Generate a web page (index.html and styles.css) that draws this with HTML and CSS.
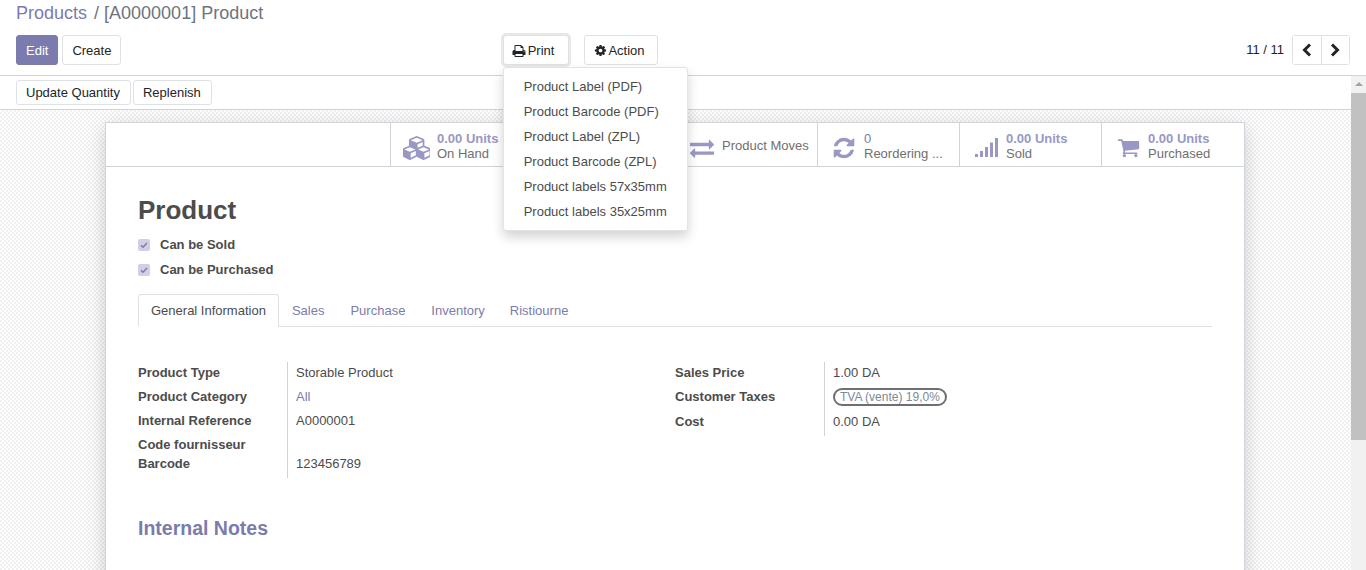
FILE: index.html
```html
<!DOCTYPE html>
<html lang="en">
<head>
<meta charset="utf-8">
<title>Product</title>
<link rel="stylesheet" href="styles.css">
</head>
<body>
<header class="control-panel">
  <ol class="breadcrumb"><li class="crumb-link">Products</li><li class="crumb-sep">/</li><li class="crumb-active">[A0000001] Product</li></ol>
  <div class="cp-row">
    <div class="cp-left">
      <button class="btn btn-primary">Edit</button>
      <button class="btn">Create</button>
    </div>
    <div class="cp-center">
      <div class="dropdown">
        <button class="btn btn-focus btn-print"><svg class="btn-icon" viewBox="0 0 1792 1792"><path d="M448 1536h896v-256h-896v256zm0-640h896v-384h-160q-40 0-68-28t-28-68v-160h-640v640zm1152 64q0-26-19-45t-45-19-45 19-19 45 19 45 45 19 45-19 19-45zm128 0v416q0 13-9.5 22.5t-22.5 9.5h-224v160q0 40-28 68t-68 28h-960q-40 0-68-28t-28-68v-160h-224q-13 0-22.5-9.5t-9.5-22.5v-416q0-79 56.5-135.5t135.5-56.5h64v-544q0-40 28-68t68-28h672q40 0 88 20t76 48l152 152q28 28 48 76t20 88v256h64q79 0 135.5 56.5t56.5 135.5z"/></svg>Print</button>
        <ul class="menu">
          <li>Product Label (PDF)</li>
          <li>Product Barcode (PDF)</li>
          <li>Product Label (ZPL)</li>
          <li>Product Barcode (ZPL)</li>
          <li>Product labels 57x35mm</li>
          <li>Product labels 35x25mm</li>
        </ul>
      </div>
      <button class="btn btn-action"><svg class="btn-icon" viewBox="0 0 1792 1792"><path d="M1152 896q0-106-75-181t-181-75-181 75-75 181 75 181 181 75 181-75 75-181zm512-109v222q0 12-8 23t-20 13l-185 28q-19 54-39 91 35 50 107 138 10 12 10 25t-9 23q-27 37-99 108t-94 71q-12 0-26-9l-138-108q-44 23-91 38-16 136-29 186-7 28-36 28h-222q-14 0-24.5-8.5t-11.5-21.5l-28-184q-49-16-90-37l-141 107q-10 9-25 9-14 0-25-11-126-114-165-168-7-10-7-23 0-12 8-23 15-21 51-66.5t54-70.5q-27-50-41-99l-183-27q-13-2-21-12.5t-8-23.5v-222q0-12 8-23t19-13l186-28q14-46 39-92-40-57-107-138-10-12-10-24 0-10 9-23 26-36 98.5-107.5t94.5-71.5q13 0 26 10l138 107q44-23 91-38 16-136 29-186 7-28 36-28h222q14 0 24.5 8.5t11.5 21.5l28 184q49 16 90 37l142-107q9-9 24-9 13 0 25 10 129 119 165 170 7 8 7 22 0 12-8 23-15 21-51 66.5t-54 70.5q26 50 41 98l183 28q13 2 21 12.5t8 23.5z"/></svg>Action</button>
    </div>
    <div class="cp-right">
      <span class="pager-text">11 / 11</span>
      <div class="pager-group">
        <button class="pager-btn"><svg class="chev" viewBox="0 0 12 14"><path d="M9 1.5 3.5 7 9 12.5"/></svg></button>
        <button class="pager-btn"><svg class="chev" viewBox="0 0 12 14"><path d="M3 1.5 8.5 7 3 12.5"/></svg></button>
      </div>
    </div>
  </div>
</header>
<div class="workspace">
  <div class="scroll-area">
    <div class="statusbar">
      <button class="btn btn-small">Update Quantity</button>
      <button class="btn btn-small">Replenish</button>
    </div>
    <main class="sheet-bg">
      <article class="sheet">
        <div class="button-box">
          <div class="stat stat-first">
            <svg class="stat-icon stat-cubes" viewBox="0 0 2048 1792"><path d="M576 1632l384-192v-314l-384 164v342zm-64-454l404-173-404-173-404 173zm1088 454l384-192v-314l-384 164v342zm-64-454l404-173-404-173-404 173zm-448-293l384-165v-266l-384 164v267zm-64-379l441-189-441-189-441 189zm1088 518v416q0 36-19 67t-52 47l-448 224q-25 14-57 14t-57-14l-448-224q-4-2-7-4-2 2-7 4l-448 224q-25 14-57 14t-57-14l-448-224q-33-16-52-47t-19-67v-416q0-38 21.5-70t56.5-48l434-186v-400q0-38 21.5-70t56.5-48l448-192q23-10 50-10t50 10l448 192q35 16 56.5 48t21.5 70v400l434 186q36 16 57 48t21 70z"/></svg>
            <div class="stat-info"><span class="stat-value">0.00 Units</span><span class="stat-text">On Hand</span></div>
          </div>
          <div class="stat"></div>
          <div class="stat">
            <svg class="stat-icon" viewBox="0 0 1792 1792"><path d="M1792 1184v192q0 13-9.5 22.5t-22.5 9.5h-1376v192q0 13-9.5 22.5t-22.5 9.5q-12 0-24-10l-319-320q-9-9-9-22 0-14 9-23l320-320q9-9 23-9 13 0 22.5 9.5t9.5 22.5v192h1376q13 0 22.5 9.5t9.5 22.5zm0-544q0 14-9 23l-320 320q-9 9-23 9-13 0-22.5-9.5t-9.5-22.5v-192h-1376q-13 0-22.5-9.5t-9.5-22.5v-192q0-13 9.5-22.5t22.5-9.5h1376v-192q0-14 9-23t23-9q12 0 24 10l319 319q9 9 9 23z"/></svg>
            <div class="stat-info stat-single"><span class="stat-text">Product Moves</span></div>
          </div>
          <div class="stat">
            <svg class="stat-icon" viewBox="0 0 1792 1792"><path d="M1639 1056q0 5-1 7-64 268-268 434.5t-478 166.5q-146 0-282.5-55t-243.5-157l-129 129q-19 19-45 19t-45-19-19-45v-448q0-26 19-45t45-19h448q26 0 45 19t19 45-19 45l-137 137q71 66 161 102t187 36q134 0 250-65t186-179q11-17 53-117 8-23 30-23h192q13 0 22.5 9.5t9.5 22.5zm25-800v448q0 26-19 45t-45 19h-448q-26 0-45-19t-19-45 19-45l138-138q-148-137-349-137-134 0-250 65t-186 179q-11 17-53 117-8 23-30 23h-199q-13 0-22.5-9.5t-9.5-22.5v-7q65-268 270-434.5t480-166.5q146 0 284 55.5t245 156.5l130-129q19-19 45-19t45 19 19 45z"/></svg>
            <div class="stat-info"><span class="stat-value stat-value-plain">0</span><span class="stat-text">Reordering ...</span></div>
          </div>
          <div class="stat stat-wide">
            <svg class="stat-icon stat-signal" viewBox="0 0 23 19"><rect x="0" y="16" width="3" height="3"/><rect x="5" y="13" width="3" height="6"/><rect x="10" y="9" width="3" height="10"/><rect x="15" y="4.5" width="3" height="14.5"/><rect x="20" y="0" width="3" height="19"/></svg>
            <div class="stat-info"><span class="stat-value">0.00 Units</span><span class="stat-text">Sold</span></div>
          </div>
          <div class="stat stat-wide">
            <svg class="stat-icon stat-cart" viewBox="0 0 1792 1792"><path d="M704 1536q0 52-38 90t-90 38-90-38-38-90 38-90 90-38 90 38 38 90zm896 0q0 52-38 90t-90 38-90-38-38-90 38-90 90-38 90 38 38 90zm128-1088v512q0 24-16.5 42.5t-40.5 21.5l-1044 122q13 60 13 70 0 16-24 64h920q26 0 45 19t19 45-19 45-45 19h-1024q-26 0-45-19t-19-45q0-11 8-31.5t16-36 21.5-40 15.5-29.5l-177-823h-204q-26 0-45-19t-19-45 19-45 45-19h256q16 0 28.5 6.5t19.5 15.5 13 24.5 8 26 5.5 29.5 4.5 26h1201q26 0 45 19t19 45z"/></svg>
            <div class="stat-info"><span class="stat-value">0.00 Units</span><span class="stat-text">Purchased</span></div>
          </div>
        </div>
        <div class="sheet-body">
          <h1 class="title">Product</h1>
          <div class="options">
            <label class="option"><span class="checkbox"><svg viewBox="0 0 12 12"><path d="M3 6.3 5 8.2 9 4"/></svg></span>Can be Sold</label>
            <label class="option"><span class="checkbox"><svg viewBox="0 0 12 12"><path d="M3 6.3 5 8.2 9 4"/></svg></span>Can be Purchased</label>
          </div>
          <nav class="tabs">
            <span class="tab tab-active">General Information</span>
            <span class="tab">Sales</span>
            <span class="tab">Purchase</span>
            <span class="tab">Inventory</span>
            <span class="tab">Ristiourne</span>
          </nav>
          <div class="groups">
            <dl class="fields fields-left">
              <dt>Product Type</dt><dd>Storable Product</dd>
              <dt>Product Category</dt><dd class="link">All</dd>
              <dt>Internal Reference</dt><dd>A0000001</dd>
              <dt class="tight">Code fournisseur</dt><dd class="tight"></dd>
              <dt>Barcode</dt><dd>123456789</dd>
            </dl>
            <dl class="fields fields-right">
              <dt>Sales Price</dt><dd>1.00 DA</dd>
              <dt>Customer Taxes</dt><dd><span class="tag">TVA (vente) 19,0%</span></dd>
              <dt>Cost</dt><dd>0.00 DA</dd>
            </dl>
          </div>
          <h2 class="notes">Internal Notes</h2>
        </div>
      </article>
    </main>
  </div>
  <div class="scrollbar"><span class="scroll-up"></span><span class="scroll-thumb"></span></div>
</div>
</body>
</html>
```
FILE: styles.css
```css
* { box-sizing: border-box; }
html, body { margin: 0; height: 100%; overflow: hidden; }
body {
  display: flex; flex-direction: column; height: 570px;
  font-family: "Liberation Sans", Arial, sans-serif;
  font-size: 13px; line-height: 19.5px; color: #4c4c4c; background: #fff;
}
button { font: inherit; margin: 0; }
ul, ol, dl, dd { margin: 0; padding: 0; list-style: none; }

.control-panel { height: 76px; flex: none; border-bottom: 1px solid #ced4da; padding: 0 16px; }
.breadcrumb { display: flex; height: 27px; font-size: 18px; line-height: 27px; }
.crumb-link { color: #7c7bad; }
.crumb-sep { color: #6c757d; padding: 0 5px 0 7px; }
.crumb-active { color: #6c757d; }
.cp-row { display: grid; grid-template-columns: 1fr 1fr 1fr; margin-top: 8px; }
.cp-left { display: flex; gap: 4px; }
.cp-center { display: flex; gap: 15px; justify-content: flex-start; padding-left: 42px; }
.cp-right { display: flex; justify-content: flex-end; align-items: center; gap: 8px; }

.btn {
  display: inline-flex; align-items: center; height: 30px; padding: 1px 9px 0;
  border: 1px solid #dee2e6; border-radius: 3px; background: #fff; color: #212529; white-space: nowrap;
}
.btn-primary { background: #7c7bad; border-color: #7c7bad; color: #fff; }
.btn-focus { box-shadow: 0 0 0 2px #e8e8e8; }
.btn-print { padding: 1px 14px 0 8px; }
.btn-print .btn-icon { width: 14px; height: 14px; }
.btn-action { padding: 1px 12px 0 9px; }
.btn-action .btn-icon { margin-right: 1px; }
.btn-small { height: 25px; padding: 0 10px 0 9px; }
.btn-icon { width: 13px; height: 13px; margin-right: 2px; fill: #212529; }

.dropdown { position: relative; }
.menu {
  position: absolute; top: 32px; left: 0; z-index: 5; width: 185px; padding: 6px 0 6px;
  background: #fff; border: 1px solid #e3e3e3; border-radius: 3px;
  box-shadow: 0 6px 12px rgba(0,0,0,.176); color: #4c4c4c;
}
.menu li { height: 25px; line-height: 25px; padding-left: 20px; white-space: nowrap; }

.pager-text { color: #212529; }
.pager-group { display: flex; border: 1px solid #dee2e6; border-radius: 3px; height: 30px; }
.pager-btn { display: flex; align-items: center; justify-content: center; width: 28px; border: 0; padding: 0; background: #fff; }
.pager-btn + .pager-btn { border-left: 1px solid #dee2e6; width: 28px; }
.chev { width: 12px; height: 14px; fill: none; stroke: #212529; stroke-width: 3; }

.workspace { flex: 1; display: flex; min-height: 0; }
.scroll-area { flex: 1; min-width: 0; display: flex; flex-direction: column; }
.statusbar { flex: none; height: 34px; padding: 4px 16px 0; display: flex; gap: 2px; border-bottom: 1px solid #ced4da; background: #fff; }
.scrollbar { flex: none; width: 15px; background: #f1f1f1; display: flex; flex-direction: column; }
.scroll-up { display: block; height: 17px; position: relative; }
.scroll-up::before {
  content: ""; display: block; width: 0; margin: 6px auto 0;
  border: 4px solid transparent; border-top: 0; border-bottom: 4px solid #a3a3a3;
}
.scroll-thumb { display: block; height: 347px; background: #c1c1c1; }

.sheet-bg {
  flex: 1; min-height: 0; overflow: hidden; padding: 12px 106px 0 105px;
  background-color: #fff;
  background-image: conic-gradient(#f0f0f0 25%, #fff 0 50%, #f0f0f0 0 75%, #fff 0);
  background-size: 4px 4px;
}
.sheet {
  width: 1140px; height: 480px; background: #fff; border: 1px solid #ced4da;
  box-shadow: 0 5px 20px -1px rgba(0,0,0,.2);
}
.button-box { display: grid; grid-template-columns: 143px repeat(4, 142px) 143px; justify-content: end; height: 44px; border-bottom: 1px solid #ced4da; }
.stat { display: flex; align-items: center; border-left: 1px solid #ced4da; padding-left: 14px; color: #6c757d; }
.stat-first { padding-left: 12px; }
.stat-wide { padding-left: 15px; }
.stat-icon { width: 24px; height: 24px; flex: none; fill: #9998c4; margin: 6px 8px 0 0; }
.stat-cubes { width: 27.4px; margin-right: 6.6px; }
.stat-signal { width: 23px; height: 19px; }
.stat-cart { width: 23px; height: 23px; }
.stat-info { display: flex; flex-direction: column; line-height: 15px; white-space: nowrap; padding-top: 3px; }
.stat-single { padding-top: 1px; }
.stat-value { font-weight: 700; color: #9998c4; }
.stat-value-plain { font-weight: 400; color: #7c7bad; }
.stat-text { color: #6f6f6f; }

.sheet-body { padding: 0 32px; }
.title { margin: 26px 0 0; font-size: 26px; line-height: 34px; font-weight: 700; color: #4c4c4c; }
.options { margin-top: 5px; }
.option { display: flex; align-items: center; height: 25px; font-weight: 700; }
.checkbox { width: 12px; height: 12px; margin-right: 10px; border-radius: 2px; background: #d0cfe4; display: block; }
.checkbox svg { display: block; fill: none; stroke: #7c7bad; stroke-width: 1.5; }
.tabs { display: flex; margin-top: 12px; height: 33px; border-bottom: 1px solid #dee2e6; }
.tab { padding: 0 13px; height: 33px; line-height: 33px; color: #7c7bad; }
.tab:last-child { margin-left: -1px; }
.tab-active { height: 33px; line-height: 31px; color: #4c4c4c; background: #fff; border: 1px solid #dee2e6; border-bottom-color: #fff; border-radius: 3px 3px 0 0; padding: 0 12px; }
.groups { display: grid; grid-template-columns: 537px 1fr; margin-top: 35px; }
.fields { display: grid; grid-template-columns: 149px 1fr; grid-auto-rows: 24px; }
.fields dt { font-weight: 700; line-height: 20px; padding-top: 1px; }
.fields dd { border-left: 1px solid #ced4da; padding: 1px 0 0 8px; line-height: 20px; }
.fields .tight { height: 19px; }
.fields-left { grid-template-rows: 24px 24px 24px 19px 25px; }
.fields-right { grid-template-rows: 24px 25px 25px; }
.link { color: #7c7bad; }
.tag { display: inline-block; height: 18px; line-height: 14px; padding: 0 5px; border: 2px solid #6f6f6f; border-radius: 9px; color: #7b8a9a; font-size: 12px; }
.notes { margin: 37px 0 0; font-size: 19.5px; line-height: 26px; font-weight: 700; color: #7c7bad; }
```
